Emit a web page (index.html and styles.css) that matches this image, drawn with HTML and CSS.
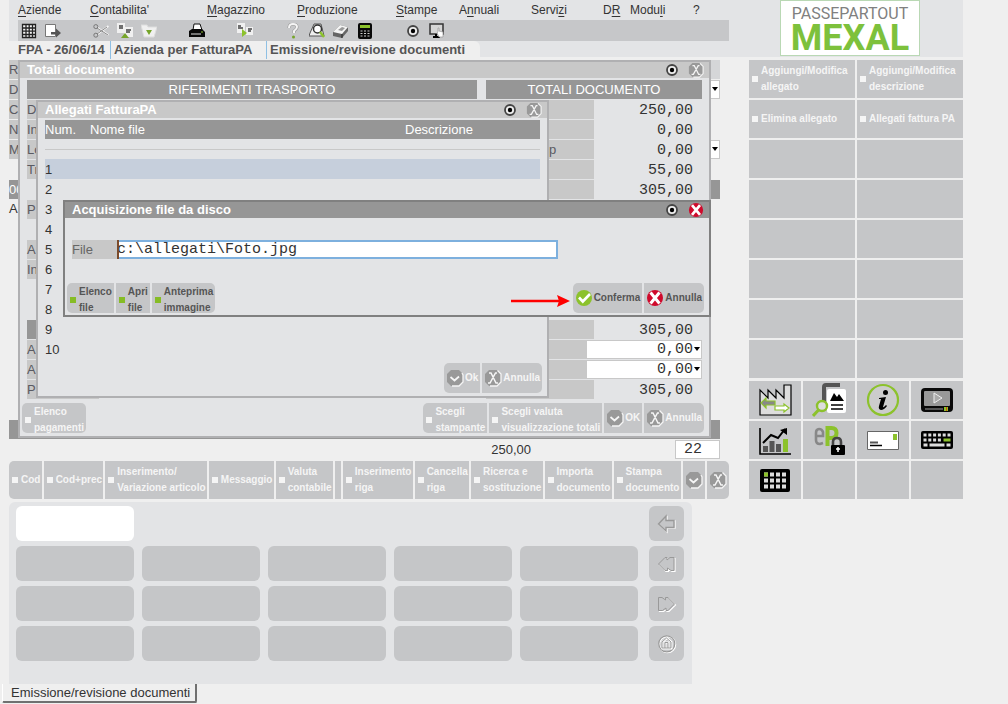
FILE: index.html
```html
<!DOCTYPE html>
<html lang="it">
<head>
<meta charset="utf-8">
<title>Passepartout Mexal - Emissione/revisione documenti</title>
<link rel="stylesheet" href="styles.css">
</head>
<body>
<svg class="defs" aria-hidden="true">
  <symbol id="target" viewBox="0 0 16 16"><circle cx="8" cy="8" r="5" fill="#eee" stroke="#444" stroke-width="1.8"/><circle cx="8" cy="8" r="2.2" fill="#000"/></symbol>
  <symbol id="x-off" viewBox="0 0 18 18"><path d="M5 1h8l4 4v8l-4 4H5l-4-4V5z" fill="#999"/><path d="M13.500 1.500L17 5v8l-4 4H6" fill="none" stroke="#f5f5f5" stroke-width="1.300"/><path d="M5 4h2l5 10h2M13 4h-1.500L6 14H4" fill="none" stroke="#f5f5f5" stroke-width="1.500"/></symbol>
  <symbol id="v-off" viewBox="0 0 18 18"><path d="M5 1h8l4 4v8l-4 4H5l-4-4V5z" fill="#999"/><path d="M16 4l1 2v7l-4 4H6" fill="none" stroke="#f5f5f5" stroke-width="1.300"/><path d="M4.500 8l4 3.500L13 7.500" fill="none" stroke="#f5f5f5" stroke-width="1.700"/></symbol>
  <symbol id="x-on" viewBox="0 0 18 18"><circle cx="9" cy="9" r="8" fill="#cf0a2c"/><path d="M4.500 3.500L13.500 14.500M13.500 3.500L4.500 14.500" stroke="#fff" stroke-width="3"/></symbol>
  <symbol id="v-on" viewBox="0 0 18 18"><circle cx="9" cy="9" r="8" fill="#8cc22c"/><path d="M4 8.500l3.800 4L15 5" fill="none" stroke="#fff" stroke-width="2.600"/></symbol>
</svg>

<header class="header">
  <div class="header-main">
    <nav class="menu">
      <button><u>A</u>ziende</button>
      <button><u>C</u>ontabilita'</button>
      <button><u>M</u>agazzino</button>
      <button><u>P</u>roduzione</button>
      <button><u>S</u>tampe</button>
      <button>A<u>n</u>nuali</button>
      <button>Servi<u>z</u>i</button>
      <button>D<u>R</u></button>
      <button>Modu<u>l</u>i</button>
      <button>?</button>
    </nav>
    <div class="toolbar">
      <div class="tools">
        <button aria-label="Griglia"><svg viewBox="0 0 16 16"><path d="M1.500 1.500h13v13h-13zM5 1v14M8.200 1v14M11.500 1v14M1 5h14M1 8.200h14M1 11.500h14" fill="#f5f5f5" stroke="#222" stroke-width="1.300"/></svg></button>
        <button aria-label="Esci"><svg viewBox="0 0 16 16"><path d="M.5 1.500h10v12H.5z" fill="#fff" stroke="#777"/><path d="M6 9h5V5.500L16 10l-5 4.500V11.500H6z" fill="#555"/></svg></button>
      </div>
      <div class="tools">
        <button aria-label="Taglia"><svg viewBox="0 0 16 16"><path d="M4 4.500L15.500 12M4 11.500L15.500 3" stroke="#f5f5f5" stroke-width="2"/><path d="M4 5l11 7M4 11l10-7" stroke="#888"/><circle cx="2.800" cy="3.600" r="2" fill="none" stroke="#777"/><circle cx="2.800" cy="12.200" r="2" fill="none" stroke="#777"/></svg></button>
        <button aria-label="Copia"><svg viewBox="0 0 16 16"><path d="M0 0h8v10H0zM7 4h9v10H7z" fill="#f0f0f0"/><path d="M2 3h4M2 5h4M9 7h5M9 9h4" stroke="#444" stroke-width="1.500"/><path d="M8 10l4 5H4z" fill="#76a52a"/></svg></button>
        <button aria-label="Incolla"><svg viewBox="0 0 16 16"><path d="M0 2h6l1 2h9l-3 10H3z" fill="#f0f0f0" stroke="#ddd"/><path d="M5 7h6l-3 5z" fill="#76a52a"/></svg></button>
      </div>
      <div class="tools">
        <button aria-label="Stampa"><svg viewBox="0 0 16 16"><path d="M4 7l1-6h6l2 6z" fill="#fff" stroke="#111"/><path d="M0 8l3-2h10l3 3v5H0z" fill="#080808"/><path d="M2 11h10" stroke="#ddd"/><path d="M12 9h2" stroke="#8cc22c"/></svg></button>
      </div>
      <div class="tools">
        <button aria-label="Duplica"><svg viewBox="0 0 16 16"><path d="M0 0h8v10H0zM9 4h7v8H9z" fill="#f0f0f0"/><path d="M1 3h3M1 5h5M11 6h4M11 8h3" stroke="#444" stroke-width="1.500"/><path d="M5 6l5 4-5 4z" fill="#8cc22c"/></svg></button>
      </div>
      <div class="tools">
        <button aria-label="Aiuto"><svg viewBox="0 0 16 16"><path d="M4 5q0-4 4-4t4 3q0 2-3 4v2" fill="none" stroke="#999" stroke-width="3"/><path d="M4 5q0-4 4-4t4 3q0 2-3 4v2" fill="none" stroke="#f5f5f5" stroke-width="2"/><circle cx="8.500" cy="14" r="1.500" fill="#76a52a"/></svg></button>
        <button aria-label="Cerca"><svg viewBox="0 0 16 16"><path d="M1 10l4-9h7l3 12H0z" fill="#eee" stroke="#555"/><circle cx="8.500" cy="6" r="4" fill="#fff" stroke="#333" stroke-width="1.500"/><path d="M11 9l4 5" stroke="#8cc22c" stroke-width="2.500"/></svg></button>
        <button aria-label="Gomma"><svg viewBox="0 0 16 16"><path d="M0 9l7-7 8 2v4l-6 7-9-2z" fill="#666"/><path d="M0 9l7-7 8 2-6 7z" fill="#f4f4f4"/><path d="M5 7l4-3 3 1-3 3z" fill="#999"/><path d="M9 11v4" stroke="#222"/></svg></button>
        <button aria-label="Calcolatrice"><svg viewBox="0 0 16 16"><rect x="1" width="14" height="16" rx="2" fill="#080808"/><path d="M3 2h10v3H3z" fill="#8cc22c"/><path d="M3.500 8h2m1.500 0h2m1.500 0h2M3.500 10.500h2m1.500 0h2m1.500 0h2M3.500 13h2m1.500 0h2m1.500 0h2" stroke="#ccc" stroke-width="1.200"/></svg></button>
      </div>
      <div class="tools">
        <button aria-label="Registra"><svg><use href="#target"/></svg></button>
        <button aria-label="Schermo"><svg viewBox="0 0 16 16"><path d="M1 1h13v10H1z" fill="#d5d5d5" stroke="#333" stroke-width="1.500"/><path d="M4 14h7M7 11v3" stroke="#000" stroke-width="2"/><path d="M9 5v4l-1 1 2 4h4V9l-4-1V5z" fill="#fff" stroke="#999" stroke-width=".7"/></svg></button>
      </div>
    </div>
    <div class="crumbs"><span>FPA - 26/06/14</span><span>Azienda per FatturaPA</span><span>Emissione/revisione documenti</span></div>
  </div>
  <div class="logo"><div class="logo-top">PASSEPARTOUT</div><div class="logo-name">MEXAL</div></div>
</header>

<div class="layout">
  <main class="main">
    <div class="workspace">
      <div class="form">
        <div class="line"><span class="cell">R</span><span class="pad"></span></div>
        <div class="line"><label class="cell" for="b1">D</label><span class="drop"><select id="b1"><option></option></select></span></div>
        <div class="line"><span class="cell">C</span></div>
        <div class="line"><span class="cell">N</span></div>
        <div class="line"><label class="cell" for="b2">M</label><span class="drop"><select id="b2"><option></option></select></span></div>
        <div class="line"></div>
        <div class="line dark">00</div>
        <div class="line plain">A</div>
        <div class="space"></div>
        <div class="line dark"></div>
      </div>

      <section class="window totals">
        <div class="titlebar"><h2>Totali documento</h2><svg><use href="#target"/></svg><button aria-label="Chiudi"><svg><use href="#x-off"/></svg></button></div>
        <div class="totals-body">
          <div class="form">
            <div class="line dark center">RIFERIMENTI TRASPORTO</div>
            <div class="line"><span class="cell">D</span></div>
            <div class="line"><span class="cell">In</span></div>
            <div class="line"><span class="cell">Lo</span></div>
            <div class="line"><span class="cell">Tr</span></div>
            <div class="line"></div>
            <div class="line"><span class="cell">P</span></div>
            <div class="line"></div>
            <div class="line"><span class="cell">A</span></div>
            <div class="line"><span class="cell">In</span></div>
            <div class="line"></div>
            <div class="line"></div>
            <div class="line dark"></div>
            <div class="line"><span class="cell">A</span></div>
            <div class="line"><span class="cell">A</span></div>
            <div class="line"><span class="cell">P</span></div>
          </div>
          <div class="form amounts">
            <div class="line dark center">TOTALI DOCUMENTO</div>
            <div class="line"><span class="cell"></span><output>250,00</output></div>
            <div class="line"><span class="cell"></span><output>0,00</output></div>
            <div class="line"><span class="cell tail">p</span><output>0,00</output></div>
            <div class="line"><span class="cell"></span><output>55,00</output></div>
            <div class="line"><span class="cell"></span><output>305,00</output></div>
            <div class="line"></div>
            <div class="line"></div>
            <div class="line"></div>
            <div class="line"></div>
            <div class="line"></div>
            <div class="line"></div>
            <div class="line"><span class="cell"></span><output>305,00</output></div>
            <div class="line"><span class="cell short"></span><span class="drop"><select aria-label="Abbuono"><option>0,00</option></select></span></div>
            <div class="line"><span class="cell short"></span><span class="drop"><select aria-label="Acconto"><option>0,00</option></select></span></div>
            <div class="line"><span class="cell"></span><output>305,00</output></div>
          </div>
        </div>
        <div class="actions">
          <div class="group"><button class="key dot">Elenco<br>pagamenti</button></div>
          <div class="group">
            <button class="key dot">Scegli<br>stampante</button>
            <button class="key dot">Scegli valuta<br>visualizzazione totali</button>
            <button class="key"><svg><use href="#v-off"/></svg>OK</button>
            <button class="key"><svg><use href="#x-off"/></svg>Annulla</button>
          </div>
        </div>
      </section>

      <section class="window attachments">
        <div class="titlebar"><h2>Allegati FatturaPA</h2><svg><use href="#target"/></svg><button aria-label="Chiudi"><svg><use href="#x-off"/></svg></button></div>
        <table class="files">
          <thead><tr><th class="num">Num.</th><th>Nome file</th><th class="desc">Descrizione</th></tr></thead>
          <tbody>
            <tr><td colspan="3"><div class="rule"></div></td></tr>
            <tr class="selected"><td>1</td><td></td><td></td></tr>
            <tr><td>2</td><td></td><td></td></tr>
            <tr><td>3</td><td></td><td></td></tr>
            <tr><td>4</td><td></td><td></td></tr>
            <tr><td>5</td><td></td><td></td></tr>
            <tr><td>6</td><td></td><td></td></tr>
            <tr><td>7</td><td></td><td></td></tr>
            <tr><td>8</td><td></td><td></td></tr>
            <tr><td>9</td><td></td><td></td></tr>
            <tr><td>10</td><td></td><td></td></tr>
          </tbody>
        </table>
        <div class="actions">
          <div class="group">
            <button class="key"><svg><use href="#v-off"/></svg>Ok</button>
            <button class="key"><svg><use href="#x-off"/></svg>Annulla</button>
          </div>
        </div>
      </section>

      <section class="window picker">
        <div class="titlebar"><h2>Acquisizione file da disco</h2><svg><use href="#target"/></svg><button aria-label="Chiudi"><svg><use href="#x-on"/></svg></button></div>
        <div class="file-row"><label for="file">File</label><input id="file" type="text" value="c:\allegati\Foto.jpg"><i class="caret"></i></div>
        <div class="actions">
          <div class="group">
            <button class="key dot on">Elenco<br>file</button>
            <button class="key dot on">Apri<br>file</button>
            <button class="key dot on">Anteprima<br>immagine</button>
          </div>
          <svg class="arrow" viewBox="0 0 60 14"><path d="M0 7h50" stroke="#f00" stroke-width="2.500"/><path d="M46 1l13 6-13 6 2-6z" fill="#f00"/></svg>
          <div class="group">
            <button class="key on"><svg><use href="#v-on"/></svg>Conferma</button>
            <button class="key on"><svg><use href="#x-on"/></svg>Annulla</button>
          </div>
        </div>
      </section>
    </div>

    <div class="status"><output>250,00</output><input type="text" value="22" aria-label="Aliquota"></div>

    <div class="functions">
      <button class="key dot">Cod</button>
      <button class="key dot">Cod+prec</button>
      <button class="key dot">Inserimento/<br>Variazione articolo</button>
      <button class="key dot">Messaggio</button>
      <button class="key dot">Valuta<br>contabile</button>
      <span class="blank"></span>
      <button class="key dot">Inserimento<br>riga</button>
      <button class="key dot">Cancella<br>riga</button>
      <button class="key dot">Ricerca e<br>sostituzione</button>
      <button class="key dot">Importa<br>documento</button>
      <button class="key dot">Stampa<br>documento</button>
      <button class="key" aria-label="Ok"><svg><use href="#v-off"/></svg></button>
      <button class="key" aria-label="Annulla"><svg><use href="#x-off"/></svg></button>
    </div>

    <div class="pad-panel">
      <input type="text" aria-label="Cerca">
      <button class="side" aria-label="Indietro"><svg viewBox="0 0 20 20"><path d="M10 3v4h8v7h-8v4l-8-7.500z" fill="none" stroke="#fff" stroke-width="1.300"/><path d="M9 2v4.500h8v7H9V17L1.500 10z" fill="#c5c6c8" stroke="#999" stroke-width="1.400"/></svg></button>
      <button aria-label="Tasto 1"></button><button aria-label="Tasto 2"></button><button aria-label="Tasto 3"></button><button aria-label="Tasto 4"></button><button aria-label="Tasto 5"></button>
      <button class="side" aria-label="Precedente"><svg viewBox="0 0 20 20"><path d="M2.500 11L9 4.500h2V7l3-2.500h4v13h-3L11.500 15v2.500H9z" fill="none" stroke="#fff" stroke-width="1.200"/><path d="M1.500 10L8 3.500h2V6l3-2.500h4v13h-3L10.500 14v2.500H8z" fill="#c5c6c8" stroke="#999"/></svg></button>
      <button aria-label="Tasto 6"></button><button aria-label="Tasto 7"></button><button aria-label="Tasto 8"></button><button aria-label="Tasto 9"></button><button aria-label="Tasto 10"></button>
      <button class="side" aria-label="Successivo"><svg viewBox="0 0 20 20"><path d="M2.500 4.500H6L9.500 7V4.500H12l6.500 6.500-6.500 6.500h-2V15l-3.500 2.500h-4z" fill="none" stroke="#fff" stroke-width="1.200"/><path d="M1.500 3.500H5L8.500 6V3.500H11l6.500 6.500-6.500 6.500H9V14l-3.500 2.500h-4z" fill="#c5c6c8" stroke="#999"/></svg></button>
      <button aria-label="Tasto 11"></button><button aria-label="Tasto 12"></button><button aria-label="Tasto 13"></button><button aria-label="Tasto 14"></button><button aria-label="Tasto 15"></button>
      <button class="side" aria-label="Inizio"><svg viewBox="0 0 20 20"><circle cx="10.500" cy="10.500" r="8" fill="none" stroke="#fff" stroke-width="1.500"/><circle cx="9.800" cy="9.800" r="8" fill="none" stroke="#999" stroke-width="1.200"/><path d="M5.500 14.500V8L10 4l4.500 4v6.500zM8.500 14V8.500h3V14" fill="none" stroke="#fff" stroke-width="2"/><path d="M5 14V8l4.500-4L14 8v6zM8 14V8.500h3V14" fill="none" stroke="#999"/></svg></button>
    </div>
  </main>

  <aside class="sidebar">
    <div class="commands">
      <button class="key dot">Aggiungi/Modifica<br>allegato</button><button class="key dot">Aggiungi/Modifica<br>descrizione</button>
      <button class="key dot">Elimina allegato</button><button class="key dot">Allegati fattura PA</button>
      <span></span><span></span><span></span><span></span><span></span><span></span>
      <span></span><span></span><span></span><span></span><span></span><span></span>
    </div>
    <div class="apps">
      <button aria-label="Trasferimenti"><svg viewBox="0 0 34 34"><path d="M2 32V7l8 8V7l8 8V7l8 8V2h7v30z" fill="#ddd" stroke="#000" stroke-width="1.200"/><path d="M3 20l5-5v3h9v4H8v3z" fill="#888" stroke="#8cc22c" stroke-width="1.200"/><path d="M31 25l-5-4v2h-9v4h9v2z" fill="#fff" stroke="#8cc22c" stroke-width="1.200"/></svg></button>
      <button aria-label="Anteprima"><svg viewBox="0 0 34 34"><path d="M12 18V4q0-2 2-2h14" fill="none" stroke="#555" stroke-width="4"/><rect x="15" y="6" width="19" height="24" rx="2" fill="#fff"/><path d="M18 18l4-8 3 4 2-3 5 7z" fill="#000"/><path d="M19 22h12M19 26h12" stroke="#000" stroke-width="1.500"/><circle cx="10" cy="23" r="5" fill="#ddd" stroke="#8cc22c" stroke-width="2.400"/><path d="M6.500 27L1 33" stroke="#8cc22c" stroke-width="3"/></svg></button>
      <button aria-label="Informazioni"><svg viewBox="0 0 34 34"><circle cx="17" cy="17" r="15" fill="#ccc" stroke="#8cc22c" stroke-width="2.200"/><circle cx="19.500" cy="9.500" r="2.500"/><path d="M13 15l7-1-3 10q0 1 3-2l1 1q-3 4-6 4-3-1-2-4l2-7h-2z" fill="#000"/></svg></button>
      <button aria-label="Video"><svg viewBox="0 0 34 34"><rect x="1" y="5" width="32" height="24" rx="4" fill="#0a0a0a"/><rect x="4" y="8" width="26" height="15" rx="1" fill="#999"/><path d="M14 10l8 5-8 5z" fill="#aaa" stroke="#eee"/><path d="M5 26h18" stroke="#555" stroke-width="2"/><path d="M24 24h4v4h-4z" fill="#8cc22c"/><path d="M26.500 24v4" stroke="#c50"/></svg></button>
      <button aria-label="Statistiche"><svg viewBox="0 0 34 34"><path d="M2 5v26h31" fill="none" stroke="#000" stroke-width="1.600"/><path d="M7.500 23v6M14 18v11M20.500 21v8" stroke="#555" stroke-width="5"/><path d="M27.500 16v13" stroke="#8cc22c" stroke-width="5"/><path d="M5 20l8-8 7 3 7-9" fill="none" stroke="#000" stroke-width="2"/><path d="M22 7l7-2v7z"/></svg></button>
      <button aria-label="eP protetto"><svg viewBox="0 0 34 34"><path d="M4 13h7V9q-1-3-4-3T4 10v7q0 4 4 4l3-1" fill="none" stroke="#888" stroke-width="2.600"/><path d="M15.500 23V5h4q5 0 5 5t-5 5h-4" fill="none" stroke="#8cc22c" stroke-width="4"/><path d="M21 22v-3q0-4 4-4t4 4v3" fill="none" stroke="#444" stroke-width="2.600"/><rect x="19" y="22" width="14" height="10" rx="1"/><path d="M26 24v5M24 26h4" stroke="#fff" stroke-width="1.500"/></svg></button>
      <button aria-label="Posta"><svg viewBox="0 0 34 34"><path d="M1.500 8.500h31v18h-31z" fill="#fff" stroke="#666"/><path d="M27 11h4v6h-4z" fill="#8cc22c"/><path d="M4 19.500h8" stroke="#555" stroke-width="2"/><path d="M4 22.500h12" stroke="#000" stroke-width="1.500"/></svg></button>
      <button aria-label="Tastiera"><svg viewBox="0 0 34 34"><rect x="1" y="8" width="32" height="18" rx="2"/><path d="M3.500 12h27M3.500 17h19" stroke="#ddd" stroke-width="3" stroke-dasharray="3 1.800"/><path d="M23.500 17h7" stroke="#8cc22c" stroke-width="3"/><path d="M3.500 22h4m2 0h15m2 0h4" stroke="#ddd" stroke-width="3"/></svg></button>
      <button aria-label="Tabella"><svg viewBox="0 0 34 34"><rect x="2" y="6" width="30" height="23" rx="2"/><path d="M6 11.500h22M6 17.500h22M6 23.500h22" stroke="#ddd" stroke-width="4" stroke-dasharray="4 2"/><path d="M6 9.500h4v4H6z" fill="#8cc22c"/></svg></button>
      <span></span><span></span><span></span>
    </div>
  </aside>
</div>
<footer class="tabs"><button>Emissione/revisione documenti</button></footer>
</body>
</html>
```
FILE: styles.css
```css
* { box-sizing: border-box; }

body {
  margin: 0;
  background: #efefef;
  color: #333;
  font: 13px/18px "Liberation Sans", sans-serif;
}

button, input, select {
  margin: 0;
  padding: 0;
  border: 0;
  border-radius: 0;
  background: none;
  color: inherit;
  font: inherit;
}

.defs { position: absolute; width: 0; height: 0; }

/* Header */
.header {
  display: grid;
  grid-template-columns: minmax(0, 1fr) 214px;
  gap: 20px;
  margin: 0 45px 0 9px;
  background: #e3e4e6;
}
.menu {
  display: grid;
  grid-template-columns: 72px 117px 90px 99px 63px 72px 72px 27px 63px 1fr;
  margin-left: 9px;
  height: 20px;
  font-size: 12px;
  line-height: 20px;
}
.menu button { text-align: left; }
.menu u { text-underline-offset: 2px; }
.toolbar {
  display: flex;
  align-items: center;
  gap: 24px;
  height: 21px;
  margin-left: 9px;
  padding-left: 3px;
  background: #c6c7c9;
}
.tools { display: flex; }
.tools button { width: 24px; height: 16px; text-align: left; }
.tools svg { display: block; width: 16px; height: 16px; }
.crumbs {
  display: grid;
  grid-template-columns: 92px 156px auto;
  width: max-content;
  height: 16px;
  padding: 0 15px 0 9px;
  border-radius: 0 6px 0 0;
  background: #efefef;
  color: #555;
  font-weight: bold;
  line-height: 18px;
  white-space: nowrap;
}
.crumbs span + span {
  padding-left: 3px;
  border-left: 1px solid #8fc0e4;
}
.logo {
  width: 140px;
  height: 56px;
  margin-left: 31px;
  border: 1px solid #b9d8b4;
  background: #fff;
  font-family: Roboto, "Liberation Sans", sans-serif;
  text-align: center;
  white-space: nowrap;
}
.logo-top { padding-top: 3px; color: #808080; font-size: 16px; line-height: 19px; }
.logo-name { color: #7dc13c; font-size: 36px; font-weight: bold; line-height: 30px; }

/* Page columns */
.layout {
  display: grid;
  grid-template-columns: minmax(0, 1fr) 214px;
  gap: 20px;
  margin: 3px 45px 0 9px;
}
.workspace { position: relative; margin-right: 9px; }

/* Form rows */
.form { display: grid; grid-auto-rows: min-content; gap: 1px; }
.line { display: flex; height: 19px; justify-content: space-between; }
.cell {
  width: 72px;
  background: #c8c8c8;
  color: #5a5a62;
  line-height: 20px;
}
.dark { background: #969696; color: #fff; line-height: 20px; }
.center { justify-content: center; }
.pad { width: 72px; background: #d5d6d8; }
.space { height: 199px; }
.drop { position: relative; display: flex; width: 116px; border: 1px solid #c8c8c8; background: #fff; }
.drop select {
  flex: 1;
  appearance: none;
  padding-right: 8px;
  font: 15px/17px "Liberation Mono", monospace;
  text-align-last: right;
}
.drop::after {
  content: "";
  position: absolute;
  top: 6px;
  right: 1px;
  border: 3px solid transparent;
  border-top: 4px solid #000;
}
output { padding-right: 9px; font: 15px/21px "Liberation Mono", monospace; }

/* Windows */
.window { position: absolute; border: 2px solid #b0b0b2; background: #e3e4e6; }
.titlebar {
  display: flex;
  align-items: center;
  gap: 7px;
  height: 16px;
  padding: 0 4px 0 7px;
  background: #c8c8c8;
  color: #fff;
}
.titlebar h2 { flex: 1; margin: 0; font-size: 13px; line-height: 16px; }
.titlebar svg { display: block; width: 16px; height: 16px; }
.titlebar button svg { width: 18px; }
.actions { display: flex; justify-content: space-between; padding: 3px 5px 3px 2px; }
.group { display: flex; gap: 2px; margin-left: auto; }
.group:first-child:not(:last-child) { margin-left: 0; }
.group .key { height: 30px; padding-right: 2px; }
.group .dot { padding-top: 3px; }
.group .key:not(.dot) { gap: 1px; padding-left: 2px; }
.group .key:first-child { border-radius: 5px 0 0 5px; }
.group .key:last-child { border-radius: 0 5px 5px 0; }
.group .key:only-child { border-radius: 5px; }

.totals { top: 0; left: 9px; right: 9px; }
.totals-body {
  display: grid;
  grid-template-columns: 1fr 216px;
  gap: 9px;
  padding: 2px 7px 1px;
}
.amounts .cell { width: 108px; }
.amounts .short { width: 100px; }
.amounts .tail { padding-left: 63px; }

.attachments { top: 40px; left: 27px; width: 513px; }
.files {
  width: calc(100% - 14px);
  margin: 2px 7px 0;
  border-collapse: collapse;
  table-layout: fixed;
}
.files th, .files td { height: 20px; padding: 0; text-align: left; font-weight: normal; line-height: 19px; }
.files th { height: 19px; background: #969696; color: #fff; }
.files .num { width: 45px; }
.files .desc { width: 135px; }
.files .selected { background: #c6cfdc; }
.rule { height: 1px; background: #c8c8c8; }
.attachments .actions { padding-top: 4px; }

.picker { top: 140px; left: 54px; right: 9px; border-color: #808080; }
.picker .titlebar { background: #969696; }
.file-row { position: relative; display: flex; height: 19px; margin: 22px 7px 21px; }
.file-row label { width: 45px; background: #c8c8c8; color: #666; line-height: 20px; }
.file-row input {
  width: 441px;
  border: 2px solid #7db0de;
  border-left-width: 0;
  background: #fff;
  font: 15px/15px "Liberation Mono", monospace;
}
.caret { position: absolute; left: 45px; width: 2px; height: 19px; background: #7a4a2a; }
.picker .actions { padding-bottom: 2px; }
.arrow { width: 60px; height: 14px; margin: 11px 2px 0 auto; }
.arrow + .group { margin-left: 0; }

/* Keys with a caption */
.key {
  display: flex;
  align-items: center;
  gap: 3px;
  overflow: hidden;
  padding: 0 1px 0 3px;
  background: #c5c6c8;
  color: #f5f5f5;
  font-size: 10px;
  font-weight: bold;
  line-height: 16px;
  text-align: left;
  white-space: nowrap;
}
.key svg { flex: none; width: 18px; height: 18px; }
.dot::before { content: ""; flex: none; width: 6px; height: 6px; background: #f5f5f5; }
.on { color: #555; }
.on::before { background: #86bc25; }

.status { display: flex; justify-content: flex-end; gap: 144px; margin: 1px 9px 0 0; }
.status output { padding: 0; font: 13px/19px "Liberation Sans", sans-serif; }
.status input {
  width: 45px;
  height: 19px;
  padding-left: 8px;
  border: 1px solid #c8c8c8;
  background: #fff;
  font: 15px/17px "Liberation Mono", monospace;
}

.functions { display: flex; gap: 2px; height: 38px; margin-top: 2px; }
.functions .key { flex: 1 1 auto; }
.functions .key:first-child { border-radius: 5px 0 0 5px; }
.functions .key:last-child { border-radius: 0 5px 5px 0; }
.functions .key:not(.dot) { padding: 0 2px; }
.blank { width: 6px; background: #c5c6c8; }

.pad-panel {
  display: grid;
  grid-template-columns: repeat(5, minmax(0, 1fr)) 38px;
  grid-auto-rows: 35px;
  gap: 5px 8px;
  margin: 3px 37px 0 0;
  padding: 4px 8px 23px 7px;
  border-radius: 6px 6px 0 0;
  background: #e3e4e6;
}
.pad-panel button { border-radius: 6px; background: #c5c6c8; }
.pad-panel input { width: 100%; padding: 0 8px; border-radius: 6px; background: #fff; }
.pad-panel .side {
  display: grid;
  grid-column: 6;
  place-items: center;
  margin-left: 3px;
}
.side svg { width: 20px; height: 20px; }

/* Sidebar */
.commands, .apps { display: grid; gap: 2px; grid-auto-rows: 38px; }
.commands { grid-template-columns: 1fr 1fr; }
.apps { grid-template-columns: repeat(4, 1fr); margin-top: 3px; }
.commands span, .apps span, .apps button { background: #c5c6c8; }
.apps button { display: grid; place-items: center; }
.apps svg { width: 34px; height: 34px; }

.tabs { display: flex; padding-left: 2px; }
.tabs button {
  height: 19px;
  padding: 0 5px 0 8px;
  border: solid #707070;
  border-width: 0 2px 2px 0;
  border-left: 1px solid #fff;
  border-radius: 0 0 2px 2px;
  line-height: 16px;
}
```
